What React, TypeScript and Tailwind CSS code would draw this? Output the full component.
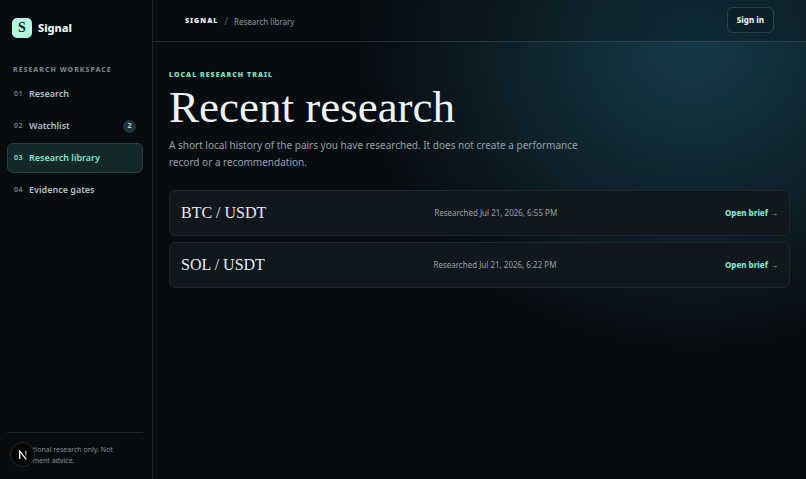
import clsx from "clsx";

const navItems = [
  { id: "01", text: "Research" },
  { id: "02", text: "Watchlist", count: 2 },
  { id: "03", text: "Research library", active: true },
  { id: "04", text: "Evidence gates" },
];

const briefs = [
  { id: 1, pair: "BTC / USDT", date: "Jul 21, 2026, 6:55 PM" },
  { id: 2, pair: "SOL / USDT", date: "Jul 21, 2026, 6:22 PM" },
];

const Sidebar = () => {
  return (
    <aside className="sticky top-0 flex h-screen w-[153px] shrink-0 flex-col border-r border-[#1e262b] bg-[#080c11] pt-[18px] pr-[9px] pb-[13px] pl-[7px]">
      <a href="#" className="flex items-center gap-[6px] pl-[5px]">
        <span className="flex size-5 items-center justify-center rounded-[5px] bg-[#b5f7de] font-['Liberation_Serif',serif] text-sm font-bold text-[#0b1f1c]">
          S
        </span>
        <span className="text-[11px] font-extrabold text-[#eef3f6]">
          Signal
        </span>
      </a>
      <h2 className="mt-6 pl-[6px] text-[7px] leading-4 font-extrabold tracking-[1px] text-[#76818a]">
        RESEARCH WORKSPACE
      </h2>
      <nav className="mt-px flex flex-col gap-[2px]">
        {navItems.map((item) => (
          <a
            key={item.id}
            href="#"
            aria-current={item.active ? "page" : undefined}
            className={clsx(
              "flex h-[30px] items-center rounded-md border px-[6px] text-[9px] font-semibold",
              item.active
                ? "border-[#24413f] bg-[#14272b] text-[#88e3c6]"
                : "border-transparent text-[#b3bec6]"
            )}
          >
            <span
              className={clsx(
                "w-[15px] text-[7px] tracking-[0.5px]",
                !item.active && "text-[#77828b]"
              )}
            >
              {item.id}
            </span>
            {item.text}
            {item.count && (
              <span className="ml-auto flex size-[13px] items-center justify-center rounded-full bg-[#20343b] text-[7px] font-bold text-[#b9d8d6]">
                {item.count}
              </span>
            )}
          </a>
        ))}
      </nav>
      <p className="mt-auto border-t border-[#1e262b] px-[6px] pt-[11px] text-[7px] leading-[11px] text-[#808b94]">
        Educational research only. Not investment advice.
      </p>
    </aside>
  );
};

const Header = () => {
  return (
    <header className="flex h-[42px] items-center justify-between border-b border-[#8fb0b0]/20 bg-[#080c11]/30 px-8">
      <div className="flex items-center gap-[6px] pt-[2px] text-[8px] text-[#8b97a0]">
        <strong className="text-[7px] font-black tracking-[1px] text-[#eef3f6]">
          SIGNAL
        </strong>
        <span className="text-[10px] text-[#56626a]">/</span>
        <span>Research library</span>
      </div>
      <button
        type="button"
        className="mb-[2px] h-[26px] rounded-md border border-[#2b414a] bg-[#0c1a22]/50 px-[9px] text-[8px] font-extrabold text-[#e6f0f2]"
      >
        Sign in
      </button>
    </header>
  );
};

// floating dev tools badge in the bottom corner
const DevBadge = () => {
  return (
    <button
      type="button"
      aria-label="Open Next.js Dev Tools"
      className="fixed bottom-3 left-[10px] flex size-[25px] items-center justify-center rounded-full border border-[#262828] bg-[#060606]"
    >
      <svg width="10" height="10" viewBox="0 0 10 10" fill="none">
        <defs>
          <linearGradient id="stem" x1="0" y1="0" x2="0" y2="1">
            <stop stopColor="#fff" />
            <stop offset="1" stopColor="#fff" stopOpacity="0.1" />
          </linearGradient>
        </defs>
        <path d="M1.7 9V1.2L8.3 9.4" stroke="#fff" strokeWidth="1.3" />
        <rect x="7.2" y="1" width="1.2" height="6" fill="url(#stem)" />
      </svg>
    </button>
  );
};

function App() {
  return (
    <div className="flex min-h-screen bg-[#080c11] bg-[radial-gradient(ellipse_330px_300px_at_86%_46px,#133847_0%,#112b36_35%,#0c1a22_70%,#080c11_100%)] font-['Noto_Sans',sans-serif]">
      <Sidebar />
      <div className="min-w-0 flex-1">
        <Header />
        <main className="px-4 pt-[25px] pb-4">
          <p className="text-[7px] leading-4 font-black tracking-[1px] text-[#7fe0bf]">
            LOCAL RESEARCH TRAIL
          </p>
          <h1 className="font-['Liberation_Serif',serif] text-[45px] leading-[48px] text-[#eef3f6]">
            Recent research
          </h1>
          <p className="mt-[6px] max-w-[420px] text-[10px] leading-[17px] text-[#97a2aa]">
            A short local history of the pairs you have researched. It does not
            create a performance record or a recommendation.
          </p>
          <ul className="mt-[19px] flex flex-col gap-[6px]">
            {briefs.map((brief) => (
              <li
                key={brief.id}
                className="flex h-[46px] items-center justify-between rounded-md border border-[#1e282c] bg-[#10171d] px-[11px]"
              >
                <h2 className="font-['Liberation_Serif',serif] text-base text-[#e6ecef]">
                  {brief.pair}
                </h2>
                <span className="text-[8px] text-[#97a2aa]">
                  Researched {brief.date}
                </span>
                <a href="#" className="text-[8px] font-extrabold text-[#88e3c6]">
                  Open brief →
                </a>
              </li>
            ))}
          </ul>
        </main>
      </div>
      <DevBadge />
    </div>
  );
}

export default App;
